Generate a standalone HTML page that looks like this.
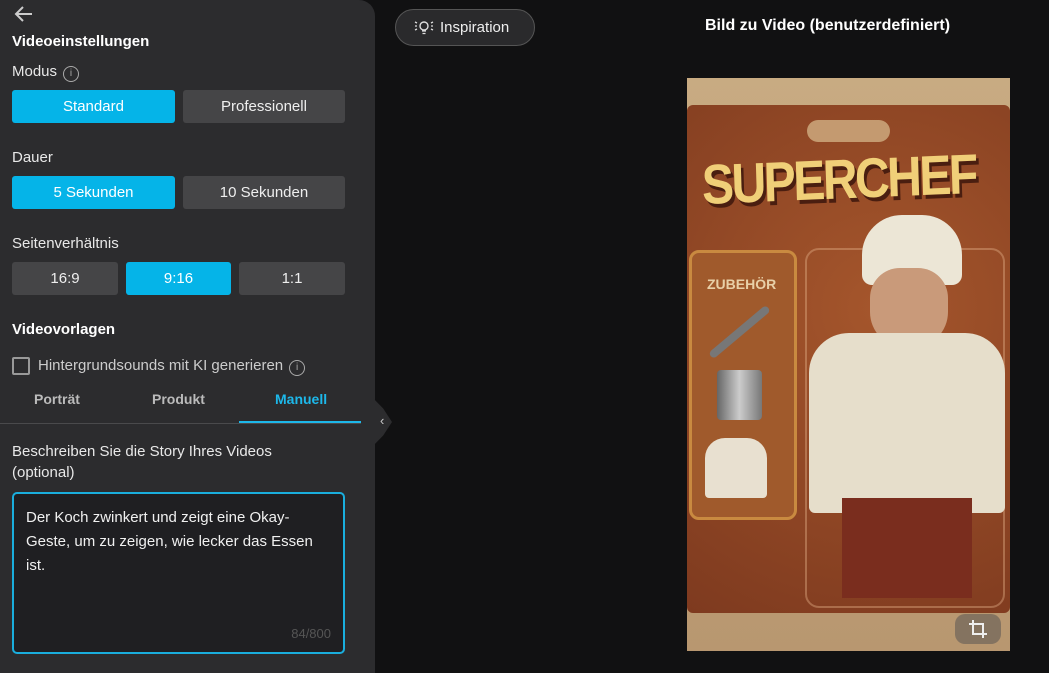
<!DOCTYPE html>
<html><head><meta charset="utf-8"><style>
*{box-sizing:border-box;margin:0;padding:0}
body{width:1049px;height:673px;background:#111112;font-family:"Liberation Sans",sans-serif;color:#eee;position:relative;overflow:hidden}
.panel{position:absolute;left:0;top:0;width:375px;height:673px;background:#2c2c2e;border-top-right-radius:16px}
.abs{position:absolute}
.h{font-weight:bold;font-size:15px;color:#fff}
.l{font-size:15px;color:#e8e8e8}
.btn{position:absolute;height:33px;border-radius:3px;background:#454547;color:#eee;font-size:15px;display:flex;align-items:center;justify-content:center}
.on{background:#05b4e8;color:#fff}
.info{display:inline-block;width:16px;height:16px;border:1px solid #aaa;border-radius:50%;font-size:10px;text-align:center;line-height:14px;color:#aaa;vertical-align:0px;margin-left:6px}
</style></head><body>
<div class="panel">
 <svg class="abs" style="left:14px;top:5px" width="20" height="18" viewBox="0 0 20 18"><path d="M18 9H3M9 2L2 9l7 7" stroke="#ccc" stroke-width="2" fill="none"/></svg>
 <div class="abs h" style="left:12px;top:33px">Videoeinstellungen</div>
 <div class="abs l" style="left:12px;top:63px">Modus<span class="info">i</span></div>
 <div class="btn on" style="left:12px;top:90px;width:163px">Standard</div>
 <div class="btn" style="left:183px;top:90px;width:162px">Professionell</div>
 <div class="abs l" style="left:12px;top:149px">Dauer</div>
 <div class="btn on" style="left:12px;top:176px;width:163px">5 Sekunden</div>
 <div class="btn" style="left:183px;top:176px;width:162px">10 Sekunden</div>
 <div class="abs l" style="left:12px;top:235px">Seitenverhältnis</div>
 <div class="btn" style="left:12px;top:262px;width:106px">16:9</div>
 <div class="btn on" style="left:126px;top:262px;width:105px">9:16</div>
 <div class="btn" style="left:239px;top:262px;width:106px">1:1</div>
 <div class="abs h" style="left:12px;top:321px">Videovorlagen</div>
 <div class="abs" style="left:12px;top:357px;width:18px;height:18px;border:2px solid #999;border-radius:2px"></div>
 <div class="abs l" style="left:38px;top:357px;color:#ccc">Hintergrundsounds mit KI generieren<span class="info">i</span></div>
 <div class="abs" style="left:34px;top:391px;font-size:14px;font-weight:bold;color:#bbb">Porträt</div>
 <div class="abs" style="left:152px;top:391px;font-size:14px;font-weight:bold;color:#bbb">Produkt</div>
 <div class="abs" style="left:275px;top:391px;font-size:14px;font-weight:bold;color:#1db8ea">Manuell</div>
 <div class="abs" style="left:0;top:423px;width:361px;height:1px;background:#4a4a4c"></div>
 <div class="abs" style="left:239px;top:421px;width:122px;height:2px;background:#1db8ea"></div>
 <div class="abs l" style="left:12px;top:441px;line-height:21px;width:295px">Beschreiben Sie die Story Ihres Videos (optional)</div>
 <div class="abs" style="left:12px;top:492px;width:333px;height:162px;border:2px solid #1aaedd;border-radius:5px;background:#1f1f22;padding:12px 12px;font-size:15px;line-height:24px;color:#f0f0f0">Der Koch zwinkert und zeigt eine Okay-Geste, um zu zeigen, wie lecker das Essen ist.
  <div class="abs" style="right:12px;bottom:6px;font-size:13px;color:#555">84/800</div></div>
</div>
<div class="abs" style="left:370px;top:395px;width:22px;height:54px;background:#2c2c2e;clip-path:polygon(0 0,60% 25%,100% 50%,60% 75%,0 100%)"></div>
<div class="abs" style="left:380px;top:413px;font-size:13px;color:#ccc">‹</div>
<div class="abs" style="left:395px;top:9px;width:140px;height:37px;border:1px solid #555;border-radius:19px;background:#2a2a2c;font-size:15px;color:#eee;display:flex;align-items:center;padding-left:18px">
 <svg width="20" height="18" viewBox="0 0 20 18"><circle cx="10" cy="7" r="4" stroke="#ddd" stroke-width="1.4" fill="none"/><path d="M8 12h4M8.5 14.5h3M1 3l2 1M1 7h2M1 11l2-1M19 3l-2 1M19 7h-2M19 11l-2-1" stroke="#ddd" stroke-width="1.3"/></svg>
 <span style="margin-left:6px">Inspiration</span></div>
<div class="abs" style="left:705px;top:17px;font-size:16px;font-weight:bold;color:#fff">Bild zu Video (benutzerdefiniert)</div>
<div class="abs" style="left:687px;top:78px;width:323px;height:573px;background:linear-gradient(#c8ab82,#b89770)">
 <div class="abs" style="left:0;top:27px;width:323px;height:508px;background:radial-gradient(circle at 60% 40%,#a5562c,#7e3a1f);border-radius:6px"></div>
 <div class="abs" style="left:120px;top:42px;width:83px;height:22px;background:#c49a70;border-radius:11px"></div>
 <div class="abs" style="left:14px;top:74px;font-size:56px;font-weight:bold;color:#f0cf78;letter-spacing:-3px;text-shadow:3px 4px 0 #4a1e10;transform:scaleX(0.86) rotate(-2deg);transform-origin:left top;white-space:nowrap">SUPERCHEF</div>
 <div class="abs" style="left:2px;top:172px;width:108px;height:270px;border:3px solid #c98a40;border-radius:10px;background:#a05a2c"></div>
 <div class="abs" style="left:20px;top:198px;font-size:14px;font-weight:bold;color:#e8d0a8">ZUBEHÖR</div>
 <div class="abs" style="left:15px;top:250px;width:75px;height:8px;background:#777;transform:rotate(-40deg);border-radius:4px"></div>
 <div class="abs" style="left:30px;top:292px;width:45px;height:50px;background:linear-gradient(90deg,#666,#ccc,#777);border-radius:4px"></div>
 <div class="abs" style="left:18px;top:360px;width:62px;height:60px;background:#e8e0d0;border-radius:20px 20px 4px 4px"></div>
 <div class="abs" style="left:118px;top:170px;width:200px;height:360px;border:2px solid rgba(230,180,140,.4);border-radius:14px"></div>
 <div class="abs" style="left:175px;top:137px;width:100px;height:70px;background:#ece6d6;border-radius:40px 40px 10px 10px"></div>
 <div class="abs" style="left:183px;top:190px;width:78px;height:80px;background:#c99a7a;border-radius:30px 30px 36px 36px"></div>
 <div class="abs" style="left:122px;top:255px;width:196px;height:180px;background:#e6decb;border-radius:40px 40px 6px 6px"></div>
 <div class="abs" style="left:155px;top:420px;width:130px;height:100px;background:#7a2d1e"></div>
 <div class="abs" style="left:268px;top:536px;width:46px;height:30px;background:rgba(110,100,90,.7);border-radius:10px"></div>
 <svg class="abs" style="left:281px;top:541px" width="20" height="20" viewBox="0 0 20 20"><path d="M5 1v14h14M1 5h14v14" stroke="#eee" stroke-width="2" fill="none"/></svg>
</div>
</body></html>
